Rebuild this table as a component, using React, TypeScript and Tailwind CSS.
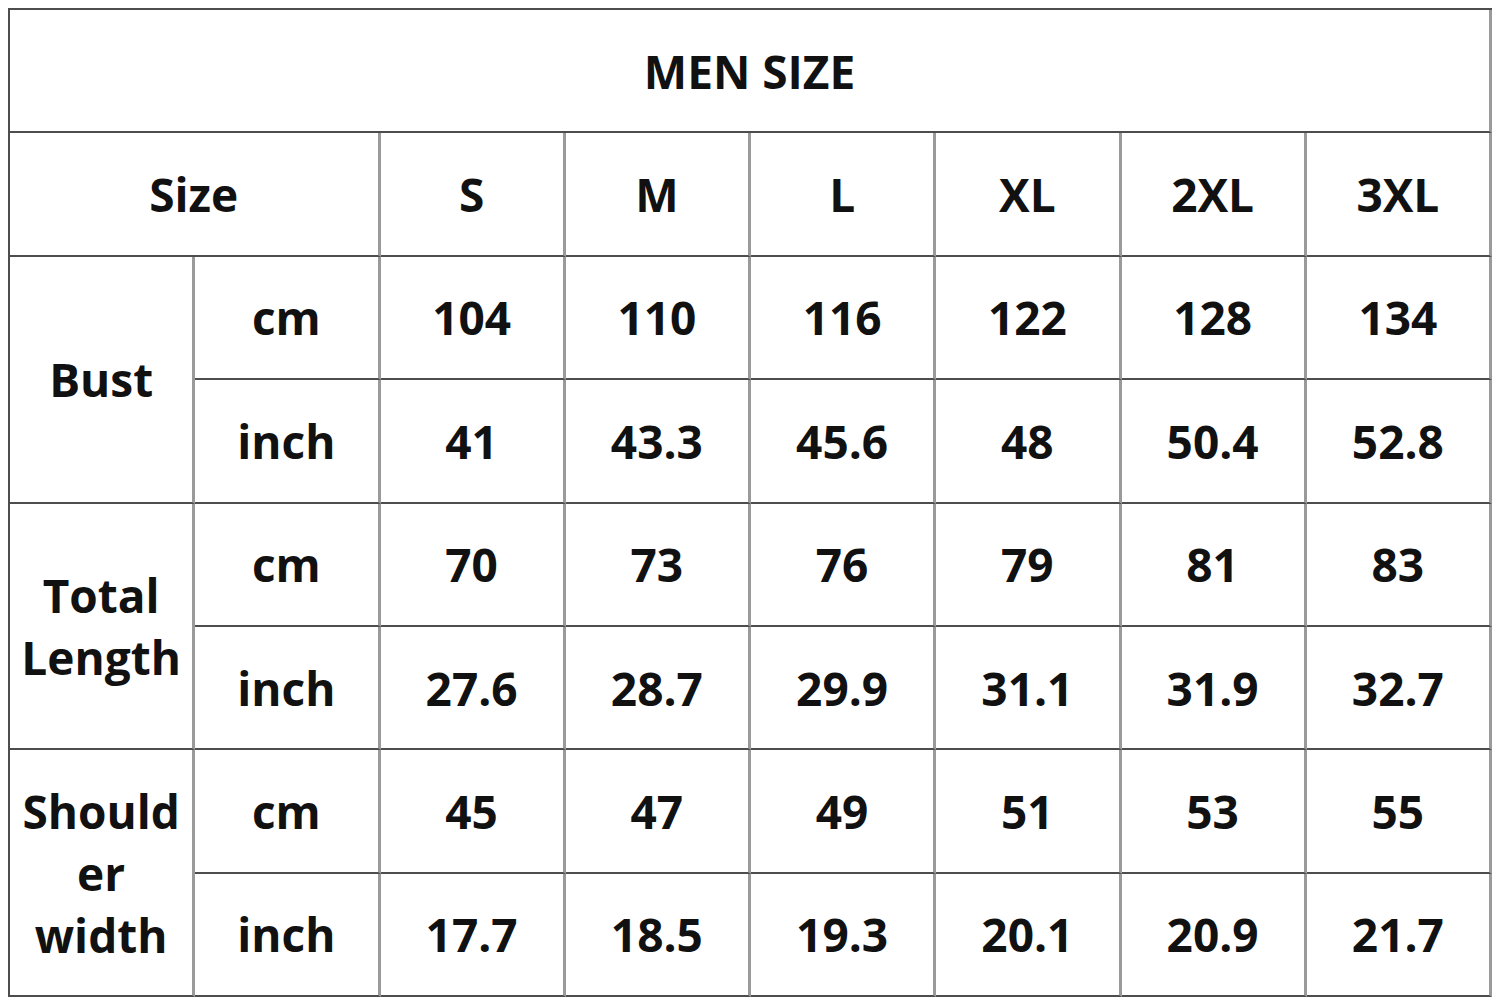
const sizes = ['S', 'M', 'L', 'XL', '2XL', '3XL']

const groups = [
  {
    label: ['Bust'],
    rows: [
      { unit: 'cm', values: ['104', '110', '116', '122', '128', '134'] },
      { unit: 'inch', values: ['41', '43.3', '45.6', '48', '50.4', '52.8'] },
    ],
  },
  {
    label: ['Total', 'Length'],
    rows: [
      { unit: 'cm', values: ['70', '73', '76', '79', '81', '83'] },
      { unit: 'inch', values: ['27.6', '28.7', '29.9', '31.1', '31.9', '32.7'] },
    ],
  },
  {
    label: ['Should', 'er', 'width'],
    rows: [
      { unit: 'cm', values: ['45', '47', '49', '51', '53', '55'] },
      { unit: 'inch', values: ['17.7', '18.5', '19.3', '20.1', '20.9', '21.7'] },
    ],
  },
]

// every cell draws its own right + bottom line
const cell =
  'flex items-center justify-center text-center border-r-[3px] border-r-[#9a9a9a] border-b-2 border-b-[#4d4d4d]'

export default function App() {
  return (
    <div className="w-[1500px] h-[1005px] bg-white pt-2 pl-2">
      <div
        className="grid grid-cols-[repeat(8,1fr)] grid-rows-[repeat(8,1fr)] w-[1484px] h-[989px] border-t-2 border-l-2 border-[#4d4d4d] text-[46px] font-bold text-[#111] leading-[62px]"
        style={{ fontFamily: '"Open Sans", "Noto Sans", sans-serif' }}
      >
        <div className={`${cell} col-span-8 border-r-[#4d4d4d] border-r-2`}>MEN SIZE</div>

        <div className={`${cell} col-span-2`}>Size</div>
        {sizes.map((s, i) => (
          <div key={s} className={`${cell} ${i === sizes.length - 1 ? 'border-r-2 border-r-[#4d4d4d]' : ''}`}>
            {s}
          </div>
        ))}

        {groups.map((g) => (
          <div key={g.label.join(' ')} className="contents">
            <div className={`${cell} row-span-2 flex-col`}>
              {g.label.map((l) => (
                <span key={l}>{l}</span>
              ))}
            </div>
            {g.rows.map((r) => (
              <div key={r.unit} className="contents">
                <div className={cell}>{r.unit}</div>
                {r.values.map((v, i) => (
                  <div
                    key={i}
                    className={`${cell} ${i === r.values.length - 1 ? 'border-r-2 border-r-[#4d4d4d]' : ''}`}
                  >
                    {v}
                  </div>
                ))}
              </div>
            ))}
          </div>
        ))}
      </div>
    </div>
  )
}
